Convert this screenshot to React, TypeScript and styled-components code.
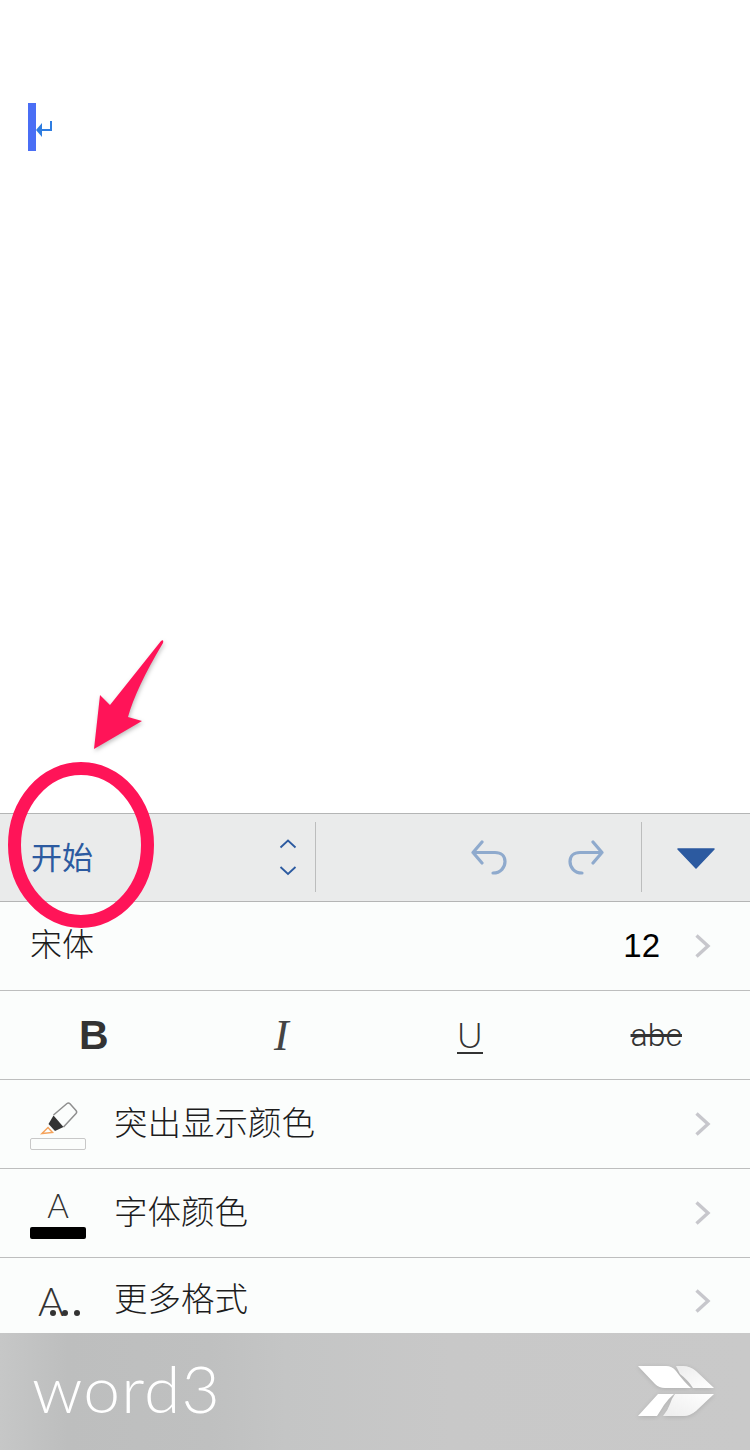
import React from 'react';
import styled, { createGlobalStyle } from 'styled-components';

const CJK = `"Noto Sans CJK SC", "Liberation Sans", sans-serif`;

const GlobalStyle = createGlobalStyle`
  html, body {
    margin: 0;
    padding: 0;
    background: #ffffff;
  }
`;

const Chevron: React.FC = () => (
  <ChevronSvg viewBox="0 0 17 26" fill="none">
    <path d="M2.5 2.5 L14 13 L2.5 23.5" stroke="#c7c7cc" strokeWidth="3.4" />
  </ChevronSvg>
);

const App: React.FC = () => (
  <Page>
    <GlobalStyle />
    <Doc>
      <Caret />
      <ReturnMark viewBox="0 0 17 18" fill="none">
        <path d="M15 1 V10 H4" stroke="#2f7de1" strokeWidth="2" />
        <path d="M0 10 L6 3 V17 Z" fill="#2f7de1" />
      </ReturnMark>
    </Doc>

    <Toolbar>
      <TabLabel>开始</TabLabel>
      <Stepper viewBox="0 0 18 50" fill="none">
        <path d="M1.500 8.500 L9 1.500 L16.500 8.500" stroke="#2c5aa0" strokeWidth="1.800" />
        <path d="M1.500 28 L9 35 L16.500 28" stroke="#2c5aa0" strokeWidth="1.800" />
      </Stepper>
      <Divider />
      <HistoryGroup>
        <HistorySvg viewBox="0 0 38 36" fill="none">
          <path
            d="M12 2 L3 12.500 L12 23 M3 12.500 H25 C31 12.500 35 16 35 21.500 C35 27 31 33 23 33"
            stroke="#8faacd"
            strokeWidth="3.200"
            strokeLinecap="round"
            strokeLinejoin="round"
          />
        </HistorySvg>
        <HistorySvg viewBox="0 0 38 36" fill="none">
          <path
            d="M26 2 L35 12.500 L26 23 M35 12.500 H13 C7 12.500 3 16 3 21.500 C3 27 7 33 15 33"
            stroke="#8faacd"
            strokeWidth="3.200"
            strokeLinecap="round"
            strokeLinejoin="round"
          />
        </HistorySvg>
      </HistoryGroup>
      <Divider />
      <CollapseBox>
        <svg width="38" height="21" viewBox="0 0 38 21">
          <path d="M1 1 H37 L19 20 Z" fill="#2c5aa0" stroke="#2c5aa0" strokeWidth="1.500" strokeLinejoin="round" />
        </svg>
      </CollapseBox>
    </Toolbar>

    <Row>
      <FontName>宋体</FontName>
      <FontSize>12</FontSize>
      <Chevron />
    </Row>

    <FormatRow>
      <BoldGlyph>B</BoldGlyph>
      <ItalicGlyph>I</ItalicGlyph>
      <UnderGlyph>U</UnderGlyph>
      <StrikeGlyph>abc</StrikeGlyph>
    </FormatRow>

    <Row>
      <HighlightIcon>
        <svg width="56" height="36" viewBox="0 0 56 36" fill="none">
          <path d="M23.500 13 L37 1.500 Q38.500 0.300 40 1.800 L46 8.500 Q47.300 10 46 11.500 L33.500 25" stroke="#8e8e8e" strokeWidth="1.500" />
          <path d="M18.500 22 L23.500 13.500 L33.500 25 L25 29 Z" fill="#333333" />
          <path d="M12 31.500 L18 25.500 L22.500 30.500 Z" stroke="#f5a35c" strokeWidth="1.500" />
        </svg>
        <SwatchOutline />
      </HighlightIcon>
      <RowLabel>突出显示颜色</RowLabel>
      <Chevron />
    </Row>

    <Row>
      <IconBox>
        <IconLetter>A</IconLetter>
        <SwatchSolid />
      </IconBox>
      <RowLabel>字体颜色</RowLabel>
      <Chevron />
    </Row>

    <LastRow>
      <MoreIcon>
        <MoreLetter>A</MoreLetter>
        <Dots>
          <Dot />
          <Dot />
          <Dot />
        </Dots>
      </MoreIcon>
      <RowLabel>更多格式</RowLabel>
      <Chevron />
    </LastRow>

    <Footer>
      <Brand>word3</Brand>
      <LogoMark width="78" height="52" viewBox="0 0 78 52">
        <defs>
          <linearGradient id="wing" x1="0" y1="0" x2="1" y2="1">
            <stop offset="0" stopColor="#ececec" />
            <stop offset="1" stopColor="#ffffff" />
          </linearGradient>
          <linearGradient id="wingLow" x1="0" y1="1" x2="1" y2="0">
            <stop offset="0" stopColor="#ededed" />
            <stop offset="1" stopColor="#ffffff" />
          </linearGradient>
        </defs>
        <path d="M0 0 H28 Q34 0 38 5 Q46 16 53 22 H27 Q21 22 17 18 Z" fill="#ffffff" />
        <path d="M38 0 H45 Q52 0 58 5 L76 22 H55 Q50 14 42 8 Z" fill="url(#wing)" />
        <path d="M20 28 H36 Q30 33 26 39 Q21 47 19 50 H0 Z" fill="#ffffff" />
        <path d="M37 28 H76 L58 45 Q52 50 46 50 H25 Q30 44 32 38 Q34 32 37 28 Z" fill="url(#wingLow)" />
      </LogoMark>
    </Footer>

    <Callout viewBox="0 0 170 300" fill="none">
      <ArrowPath d="M94 119 L100 65 L110 75 L161 11 Q164 9 163 13 Q136 58 128 87 L142 91 Z" />
      <ellipse cx="81" cy="215" rx="66.500" ry="76.500" stroke="#ff1458" strokeWidth="13" />
    </Callout>
  </Page>
);

const Page = styled.div`
  position: relative;
  width: 750px;
  height: 1450px;
  display: flex;
  flex-direction: column;
  overflow: hidden;
  background: #ffffff;
`;

const Doc = styled.div`
  height: 710px;
  padding: 103px 0 0 28px;
  display: flex;
  align-items: flex-start;
`;

const Caret = styled.div`
  width: 8px;
  height: 48px;
  background: #4a6ef5;
`;

const ReturnMark = styled.svg`
  width: 17px;
  height: 18px;
  margin-top: 17px;
`;

const Toolbar = styled.div`
  height: 87px;
  display: flex;
  align-items: center;
  background: #eaebeb;
  border-top: 1px solid #b4b5b5;
  border-bottom: 1px solid #b4b5b5;
`;

const TabLabel = styled.div`
  width: 248px;
  padding-left: 31px;
  margin-top: -4px;
  font-family: ${CJK};
  font-size: 31px;
  color: #2c5aa0;
`;

const Stepper = styled.svg`
  width: 18px;
  height: 50px;
  margin-right: 18px;
  transform: translateY(6px);
`;

const Divider = styled.div`
  width: 1px;
  height: 70px;
  margin-bottom: 2px;
  background: #bcbdbd;
`;

const HistoryGroup = styled.div`
  width: 325px;
  display: flex;
  justify-content: flex-end;
  gap: 59px;
  padding-right: 36px;
  box-sizing: border-box;
`;

const HistorySvg = styled.svg`
  width: 38px;
  height: 36px;
`;

const CollapseBox = styled.div`
  flex: 1;
  display: flex;
  justify-content: center;
  transform: translateY(1px);
`;

const Row = styled.div`
  height: 88px;
  flex-shrink: 0;
  display: flex;
  align-items: center;
  padding: 0 38px 0 30px;
  background: #fbfdfc;
  border-bottom: 1px solid #bdbebe;
`;

const LastRow = styled(Row)`
  height: 65px;
  padding-top: 10px;
  border-bottom: none;
`;

const FontName = styled.div`
  flex: 1;
  margin-top: -8px;
  font-family: ${CJK};
  font-weight: 300;
  font-size: 32px;
  color: #1c1c1c;
`;

const FontSize = styled.div`
  margin-right: 35px;
  font-family: "Liberation Sans", sans-serif;
  font-size: 33px;
  color: #000000;
`;

const ChevronSvg = styled.svg`
  width: 17px;
  height: 26px;
  flex-shrink: 0;
  margin-left: auto;
  transform: translateX(-1px);
`;

const FormatRow = styled.div`
  height: 88px;
  flex-shrink: 0;
  display: grid;
  grid-template-columns: repeat(4, 1fr);
  align-items: center;
  justify-items: center;
  background: #fbfdfc;
  border-bottom: 1px solid #bdbebe;
  color: #333333;
`;

const BoldGlyph = styled.span`
  font-family: "Liberation Sans", sans-serif;
  font-weight: 700;
  font-size: 41px;
`;

const ItalicGlyph = styled.span`
  font-family: "Liberation Serif", serif;
  font-style: italic;
  font-size: 44px;
  color: #444444;
`;

const UnderGlyph = styled.span`
  padding: 0 0 1px;
  font-family: Lato, sans-serif;
  font-weight: 300;
  font-size: 36px;
  line-height: 34px;
  border-bottom: 2px solid #333333;
  transform: translateX(1px);
`;

const StrikeGlyph = styled.span`
  font-family: Roboto, sans-serif;
  font-weight: 300;
  font-size: 32px;
  text-decoration: line-through;
`;

const IconBox = styled.div`
  width: 56px;
  flex-shrink: 0;
  display: flex;
  flex-direction: column;
  align-items: center;
  margin-top: 1px;
`;

const HighlightIcon = styled(IconBox)`
  margin-top: 4px;
`;

const SwatchOutline = styled.div`
  width: 56px;
  height: 12px;
  box-sizing: border-box;
  border: 1px solid #c8c8c8;
  border-radius: 2px;
`;

const SwatchSolid = styled.div`
  width: 56px;
  height: 12px;
  background: #000000;
  border-radius: 2px;
`;

const IconLetter = styled.div`
  margin-bottom: 5px;
  font-family: Lato, sans-serif;
  font-weight: 300;
  font-size: 33px;
  line-height: 34px;
  color: #333333;
`;

const MoreIcon = styled.div`
  width: 56px;
  flex-shrink: 0;
  display: flex;
  align-items: flex-end;
  padding-left: 8px;
  box-sizing: border-box;
`;

const MoreLetter = styled.div`
  font-family: Lato, sans-serif;
  font-weight: 300;
  font-size: 40px;
  line-height: 40px;
  color: #333333;
`;

const Dots = styled.div`
  display: flex;
  flex-shrink: 0;
  gap: 6px;
  margin: 0 0 5px -14px;
`;

const Dot = styled.div`
  width: 6px;
  height: 6px;
  border-radius: 50%;
  background: #333333;
`;

const RowLabel = styled.div`
  margin: -8px 0 0 28px;
  font-family: ${CJK};
  font-weight: 300;
  font-size: 33.5px;
  color: #1c1c1c;
`;

const Footer = styled.div`
  flex: 1;
  display: flex;
  align-items: center;
  justify-content: space-between;
  padding: 0 34px 0 32px;
  background: linear-gradient(90deg, #c6c7c7 0%, #bdbebe 9%, #bfc0c0 28%, #c4c5c5 38%, #c8c8c8 60%, #c9c9c9 100%);
`;

const Brand = styled.div`
  margin-top: -7px;
  font-family: Lato, sans-serif;
  font-weight: 300;
  font-size: 66px;
  line-height: 66px;
  letter-spacing: 1.2px;
  color: #ffffff;
`;

const LogoMark = styled.svg`
  filter: drop-shadow(0 1px 2px rgba(0, 0, 0, 0.12));
`;

const Callout = styled.svg`
  position: absolute;
  left: 0;
  top: 630px;
  width: 170px;
  height: 300px;
`;

const ArrowPath = styled.path`
  fill: #ff1458;
  filter: drop-shadow(1px 2px 2px rgba(0, 0, 0, 0.25));
`;

export default App;
